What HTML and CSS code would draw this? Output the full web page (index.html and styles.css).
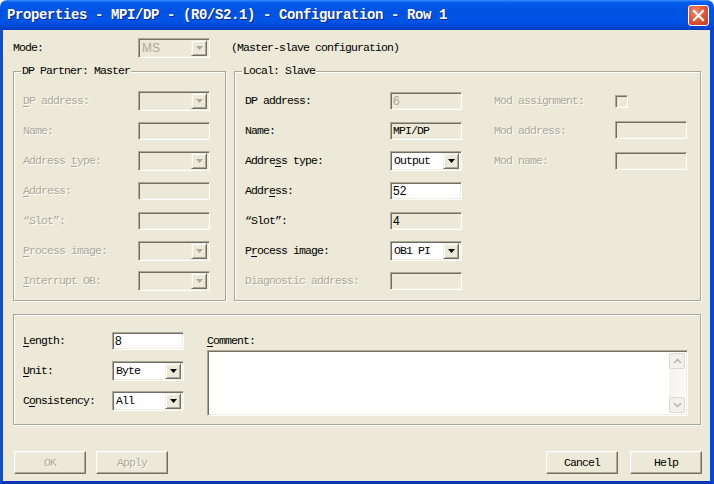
FILE: index.html
```html
<!DOCTYPE html>
<html>
<head>
<meta charset="utf-8">
<link rel="stylesheet" href="styles.css">
</head>
<body>
<div class="window">
  <div class="titlebar">
    <span class="title">Properties - MPI/DP - (R0/S2.1) - Configuration - Row 1</span>
    <span class="close"><svg width="13" height="13" viewBox="0 0 13 13"><path d="M2 2 L11 11 M11 2 L2 11" stroke="#fff" stroke-width="2.2" stroke-linecap="square"/></svg></span>
  </div>
  <div class="client">
    <div class="mode-row">
      <span class="lbl mode-lbl">Mode:</span>
      <div class="combo disabled"><span class="val sans">MS</span><span class="arrow"><svg width="7" height="4" viewBox="0 0 7 4"><path d="M0 0H7L3.5 4Z"/></svg></span></div>
      <span class="mode-desc">(Master-slave configuration)</span>
    </div>

    <div class="groups">
      <div class="group partner">
        <span class="legend">DP Partner: Master</span>
        <div class="rows">
          <div class="row"><span class="lbl dis"><u>D</u>P address:</span><div class="combo disabled"><span class="val"></span><span class="arrow"><svg width="7" height="4" viewBox="0 0 7 4"><path d="M0 0H7L3.5 4Z"/></svg></span></div></div>
          <div class="row"><span class="lbl dis">Name:</span><div class="edit disabled"></div></div>
          <div class="row"><span class="lbl dis">Address <u>t</u>ype:</span><div class="combo disabled"><span class="val"></span><span class="arrow"><svg width="7" height="4" viewBox="0 0 7 4"><path d="M0 0H7L3.5 4Z"/></svg></span></div></div>
          <div class="row"><span class="lbl dis"><u>A</u>ddress:</span><div class="edit disabled"></div></div>
          <div class="row"><span class="lbl dis">“Slot”:</span><div class="edit disabled"></div></div>
          <div class="row"><span class="lbl dis"><u>P</u>rocess image:</span><div class="combo disabled"><span class="val"></span><span class="arrow"><svg width="7" height="4" viewBox="0 0 7 4"><path d="M0 0H7L3.5 4Z"/></svg></span></div></div>
          <div class="row"><span class="lbl dis"><u>I</u>nterrupt OB:</span><div class="combo disabled"><span class="val"></span><span class="arrow"><svg width="7" height="4" viewBox="0 0 7 4"><path d="M0 0H7L3.5 4Z"/></svg></span></div></div>
        </div>
      </div>

      <div class="group local">
        <span class="legend">Local: Slave</span>
        <div class="rows main">
          <div class="row"><span class="lbl">DP address:</span><div class="edit disabled"><span class="sans grey">6</span></div></div>
          <div class="row"><span class="lbl">Name:</span><div class="edit readonly">MPI/DP</div></div>
          <div class="row"><span class="lbl">Addre<u>s</u>s type:</span><div class="combo"><span class="val">Output</span><span class="arrow"><svg width="7" height="4" viewBox="0 0 7 4"><path d="M0 0H7L3.5 4Z"/></svg></span></div></div>
          <div class="row"><span class="lbl">Addr<u>e</u>ss:</span><div class="edit"><span class="sans">52</span></div></div>
          <div class="row"><span class="lbl">“Slot”:</span><div class="edit readonly"><span class="sans">4</span></div></div>
          <div class="row"><span class="lbl">P<u>r</u>ocess image:</span><div class="combo"><span class="val">OB1 PI</span><span class="arrow"><svg width="7" height="4" viewBox="0 0 7 4"><path d="M0 0H7L3.5 4Z"/></svg></span></div></div>
          <div class="row"><span class="lbl dis">Diagnostic address:</span><div class="edit disabled"></div></div>
        </div>
        <div class="rows mod">
          <div class="row"><span class="lbl dis">Mod assignment:</span><span class="check"></span></div>
          <div class="row up"><span class="lbl dis">Mod address:</span><div class="edit disabled"></div></div>
          <div class="row"><span class="lbl dis">Mod name:</span><div class="edit disabled"></div></div>
        </div>
      </div>
    </div>

    <div class="group data">
      <div class="rows">
        <div class="row"><span class="lbl"><u>L</u>ength:</span><div class="edit"><span class="sans">8</span></div></div>
        <div class="row"><span class="lbl"><u>U</u>nit:</span><div class="combo"><span class="val">Byte</span><span class="arrow"><svg width="7" height="4" viewBox="0 0 7 4"><path d="M0 0H7L3.5 4Z"/></svg></span></div></div>
        <div class="row"><span class="lbl">C<u>o</u>nsistency:</span><div class="combo"><span class="val">All</span><span class="arrow"><svg width="7" height="4" viewBox="0 0 7 4"><path d="M0 0H7L3.5 4Z"/></svg></span></div></div>
      </div>
      <div class="comment">
        <span class="lbl"><u>C</u>omment:</span>
        <div class="memo">
          <div class="memo-text"></div>
          <div class="vscroll">
            <span class="sbtn"><svg width="9" height="6" viewBox="0 0 9 6"><path d="M1 5L4.5 1.5L8 5" fill="none" stroke="#b9b8ae" stroke-width="1.6"/></svg></span>
            <span class="track"></span>
            <span class="sbtn"><svg width="9" height="6" viewBox="0 0 9 6"><path d="M1 1L4.5 4.5L8 1" fill="none" stroke="#b9b8ae" stroke-width="1.6"/></svg></span>
          </div>
        </div>
      </div>
    </div>

    <div class="buttons">
      <div class="btns left">
        <span class="btn dis">OK</span>
        <span class="btn dis">Apply</span>
      </div>
      <div class="btns right">
        <span class="btn">Cancel</span>
        <span class="btn">Help</span>
      </div>
    </div>
  </div>
</div>
</body>
</html>
```

FILE: styles.css
```css
* { box-sizing: border-box; }
html, body { margin: 0; padding: 0; }
body {
  background: #ffffff;
  width: 714px;
  height: 484px;
  overflow: hidden;
  font-family: "Liberation Mono", monospace;
  font-size: 11.5px;
  letter-spacing: -0.9px;
  color: #000;
}
u { text-decoration: underline; text-underline-offset: 2px; }

.window {
  width: 714px;
  height: 484px;
  display: flex;
  flex-direction: column;
  border-radius: 7px 7px 0 0;
  overflow: hidden;
}
.titlebar {
  height: 30px;
  flex: none;
  display: flex;
  align-items: center;
  justify-content: space-between;
  padding: 0 5px 0 7px;
  background: linear-gradient(to bottom, #3b8ef8 0, #0a62f0 2px, #0058ea 4px, #0052e2 12px, #0055e8 20px, #004ad8 26px, #003cc0 30px);
}
.title {
  color: #fff;
  font-weight: bold;
  font-size: 14px;
  letter-spacing: -0.4px;
  text-shadow: 1px 1px 0 #0b2590;
  white-space: nowrap;
}
.close {
  width: 21px;
  height: 21px;
  border: 1px solid #fff;
  border-radius: 3px;
  background: radial-gradient(circle at 35% 30%, #f08a6a 0, #e05a38 45%, #c43c18 100%);
  display: flex;
  align-items: center;
  justify-content: center;
}
.close svg { display: block; }

.client {
  flex: 1;
  background: #ece9d8;
  border-left: 3px solid #0a4fd9;
  border-right: 4px solid #0847d0;
  border-bottom: 3px solid #0837b8;
  padding: 8px 9px 0 10px;
  display: flex;
  flex-direction: column;
}

.lbl { white-space: nowrap; line-height: 14px; }
.dis { color: #aca899; text-shadow: 1px 1px 0 #fff; }
.sans { font-family: "Liberation Sans", sans-serif; font-size: 12px; letter-spacing: 0; }
.grey { color: #aca899; }

.mode-row { display: flex; align-items: center; height: 19px; }
.mode-lbl { width: 125px; }
.mode-desc { margin-left: 21px; }

/* edit & combo */
.edit, .combo {
  width: 72px;
  border: 1px solid;
  border-color: #aca899 #fff #fff #aca899;
  box-shadow: inset 1px 1px 0 #716f64, inset -1px -1px 0 #f1efe2;
  background: #fff;
  flex: none;
}
.edit {
  height: 18px;
  padding: 0 2px;
  line-height: 16px;
  white-space: nowrap;
}
.edit.disabled, .edit.readonly { background: #ece9d8; }
.combo {
  height: 20px;
  display: flex;
  align-items: center;
  padding: 2px;
}
.combo.disabled { background: #ece9d8; }
.combo .val { flex: 1; padding-left: 1px; line-height: 16px; white-space: nowrap; }
.combo.disabled .val { color: #aca899; }
.arrow {
  width: 16px;
  height: 16px;
  border: 1px solid;
  border-color: #f1efe2 #716f64 #716f64 #f1efe2;
  box-shadow: inset 1px 1px 0 #fff, inset -1px -1px 0 #aca899;
  background: #ece9d8;
  display: flex;
  align-items: center;
  justify-content: center;
}
.arrow svg { display: block; fill: #000; }
.combo.disabled .arrow svg { fill: #aca899; }

.check {
  width: 13px;
  height: 13px;
  border: 1px solid;
  border-color: #aca899 #fff #fff #aca899;
  box-shadow: inset 1px 1px 0 #716f64, inset -1px -1px 0 #f1efe2;
  background: #ece9d8;
}

/* groups */
.groups { display: flex; gap: 8px; margin-top: 14px; height: 230px; flex: none; }
.group {
  position: relative;
  border: 1px solid #aca899;
  box-shadow: 1px 1px 0 #fff, inset 1px 1px 0 #fff;
}
.legend {
  position: absolute;
  top: -8px;
  left: 7px;
  padding: 0 1px;
  background: #ece9d8;
  line-height: 14px;
  white-space: nowrap;
}
.rows { display: flex; flex-direction: column; gap: 10px; }
.row { display: flex; align-items: center; height: 20px; }

.partner { width: 213px; padding: 19px 0 0 9px; }
.partner .lbl { width: 115px; }

.local { flex: 1; display: flex; padding: 19px 0 0 10px; }
.local .main .lbl { width: 145px; }
.local .mod { margin-left: 32px; }
.local .mod .lbl { width: 121px; }
.local .mod .row.up .edit { margin-top: -3px; }

.data {
  height: 111px;
  flex: none;
  margin-top: 13px;
  display: flex;
  padding: 16px 12px 0 9px;
}
.data .rows .lbl { width: 89px; }
.comment {
  margin-left: 23px;
  flex: 1;
  display: flex;
  flex-direction: column;
  padding-top: 3px;
}
.memo {
  margin-top: 2px;
  height: 66px;
  border: 1px solid;
  border-color: #aca899 #fff #fff #aca899;
  box-shadow: inset 1px 1px 0 #716f64, inset -1px -1px 0 #f1efe2;
  background: #fff;
  display: flex;
  padding: 2px;
}
.memo-text { flex: 1; }
.vscroll {
  width: 16px;
  display: flex;
  flex-direction: column;
  background: linear-gradient(to right, #f3f2ec, #fbfbf8);
}
.sbtn {
  height: 16px;
  border: 1px solid #dcdbd2;
  border-radius: 2px;
  background: #f1f0ea;
  display: flex;
  align-items: center;
  justify-content: center;
}
.track { flex: 1; }

/* buttons */
.buttons {
  display: flex;
  justify-content: space-between;
  margin-top: 26px;
  padding-left: 1px;
  margin-right: -1px;
}
.btns { display: flex; gap: 10px; }
.btns.right { gap: 12px; }
.btn {
  width: 72px;
  height: 23px;
  border: 1px solid;
  border-color: #fff #716f64 #716f64 #fff;
  box-shadow: inset -1px -1px 0 #aca899, inset 1px 1px 0 #f1efe2;
  background: #ece9d8;
  display: flex;
  align-items: center;
  justify-content: center;
  line-height: 14px;
}
.btn.dis { color: #aca899; text-shadow: 1px 1px 0 #fff; }
```
